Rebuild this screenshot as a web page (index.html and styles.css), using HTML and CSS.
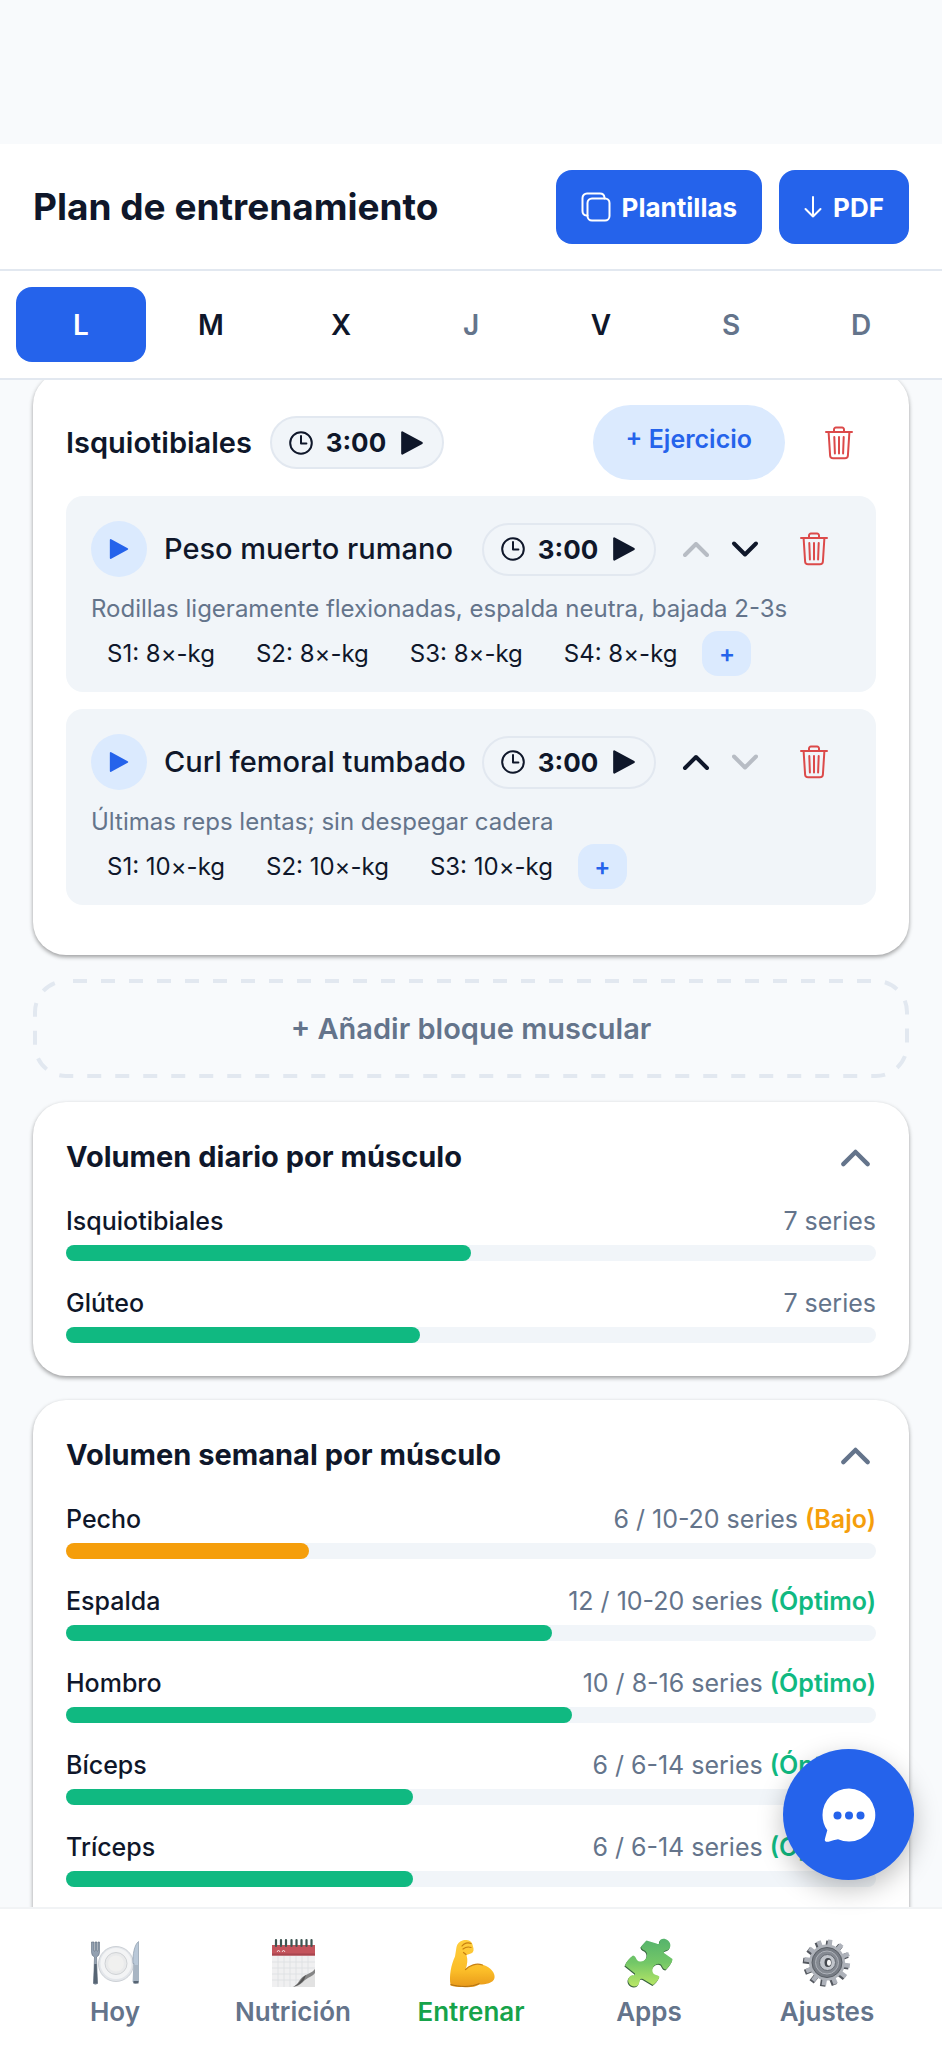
FILE: index.html
```html
<!DOCTYPE html>
<html lang="es">
<head>
<meta charset="utf-8">
<meta name="viewport" content="width=device-width, initial-scale=1">
<title>Plan de entrenamiento</title>
<link rel="stylesheet" href="styles.css">
</head>
<body>
<svg class="defs" aria-hidden="true">
  <symbol id="i-clock" viewBox="0 0 24 24"><circle cx="12" cy="12" r="10.8"/><path d="M12 5v7.6h5.4"/></symbol>
  <symbol id="i-play" viewBox="0 0 24 24"><path d="M3 2.2v19.600L21 12z"/></symbol>
  <symbol id="i-up" viewBox="0 0 28 28"><path d="M3 20 14 9l11 11"/></symbol>
  <symbol id="i-down" viewBox="0 0 28 28"><path d="M3 8.500l11 11 11-11"/></symbol>
  <symbol id="i-trash" viewBox="0 0 28 34"><path d="M1 6h26M3.600 6l1.500 23.500a3 3 0 0 0 3 2.800h11.800a3 3 0 0 0 3-2.800L24.400 6M9 6V3.600A2 2 0 0 1 11 1.500h6a2 2 0 0 1 2 2.100V6M9.300 11l.6 16.500M14 11v16.500M18.700 11l-.6 16.500"/></symbol>
</svg>
<div class="app">
  <header class="header">
    <h1 class="title">Plan de entrenamiento</h1>
    <button class="btn" type="button">
      <svg class="ic-copy" viewBox="0 0 30 30" aria-hidden="true"><rect x="6.500" y="6.500" width="22" height="22" rx="4.500"/><path d="M6.500 23.500H5.500a4.500 4.500 0 0 1-4-4.500V6a4.500 4.500 0 0 1 4.500-4.500h13a4.500 4.500 0 0 1 4.500 4v1"/></svg>
      Plantillas
    </button>
    <button class="btn" type="button">
      <svg class="ic-arrow" viewBox="0 0 18 22" aria-hidden="true"><path d="M9 1v19.500M1.500 13 9 20.500 16.500 13"/></svg>
      PDF
    </button>
  </header>
  <nav class="days" aria-label="Días">
    <button class="day active" type="button">L</button>
    <button class="day" type="button">M</button>
    <button class="day" type="button">X</button>
    <button class="day rest" type="button">J</button>
    <button class="day" type="button">V</button>
    <button class="day rest" type="button">S</button>
    <button class="day rest" type="button">D</button>
  </nav>
  <main class="content">
    <section class="card block">
      <div class="block-head">
        <h2 class="block-name">Isquiotibiales</h2>
        <button class="timer" type="button"><svg class="ic-clock"><use href="#i-clock"/></svg>3:00<svg class="ic-play"><use href="#i-play"/></svg></button>
        <button class="add-ex" type="button">+ Ejercicio</button>
        <button class="trash" type="button" aria-label="Eliminar bloque"><svg class="ic-trash"><use href="#i-trash"/></svg></button>
      </div>
      <article class="exercise">
        <div class="ex-head">
          <button class="video" type="button" aria-label="Ver vídeo"><svg class="ic-video"><use href="#i-play"/></svg></button>
          <h3 class="ex-name">Peso muerto rumano</h3>
          <button class="timer" type="button"><svg class="ic-clock"><use href="#i-clock"/></svg>3:00<svg class="ic-play"><use href="#i-play"/></svg></button>
          <div class="moves">
            <button class="move" type="button" aria-label="Subir" disabled><svg class="ic-chev"><use href="#i-up"/></svg></button>
            <button class="move" type="button" aria-label="Bajar"><svg class="ic-chev"><use href="#i-down"/></svg></button>
          </div>
          <button class="trash" type="button" aria-label="Eliminar ejercicio"><svg class="ic-trash"><use href="#i-trash"/></svg></button>
        </div>
        <p class="note">Rodillas ligeramente flexionadas, espalda neutra, bajada 2-3s</p>
        <div class="sets">
          <span class="set">S1: 8×-kg</span><span class="set">S2: 8×-kg</span><span class="set">S3: 8×-kg</span><span class="set">S4: 8×-kg</span>
          <button class="add-set" type="button" aria-label="Añadir serie">+</button>
        </div>
      </article>
      <article class="exercise">
        <div class="ex-head">
          <button class="video" type="button" aria-label="Ver vídeo"><svg class="ic-video"><use href="#i-play"/></svg></button>
          <h3 class="ex-name">Curl femoral tumbado</h3>
          <button class="timer" type="button"><svg class="ic-clock"><use href="#i-clock"/></svg>3:00<svg class="ic-play"><use href="#i-play"/></svg></button>
          <div class="moves">
            <button class="move" type="button" aria-label="Subir"><svg class="ic-chev"><use href="#i-up"/></svg></button>
            <button class="move" type="button" aria-label="Bajar" disabled><svg class="ic-chev"><use href="#i-down"/></svg></button>
          </div>
          <button class="trash" type="button" aria-label="Eliminar ejercicio"><svg class="ic-trash"><use href="#i-trash"/></svg></button>
        </div>
        <p class="note">Últimas reps lentas; sin despegar cadera</p>
        <div class="sets">
          <span class="set">S1: 10×-kg</span><span class="set">S2: 10×-kg</span><span class="set">S3: 10×-kg</span>
          <button class="add-set" type="button" aria-label="Añadir serie">+</button>
        </div>
      </article>
    </section>

    <button class="add-block" type="button">
      <svg class="dashes" aria-hidden="true"><rect class="dash-rect" x="2" y="2" rx="31"/></svg>
      + Añadir bloque muscular
    </button>

    <section class="card">
      <div class="vol-head"><h2 class="vol-title">Volumen diario por músculo</h2><button class="fold" type="button" aria-label="Plegar"><svg class="ic-fold"><use href="#i-up"/></svg></button></div>
      <div class="rows">
        <div class="row"><span class="muscle">Isquiotibiales</span><span class="count">7 series</span><div class="track"><div class="fill" style="width:50%"></div></div></div>
        <div class="row"><span class="muscle">Glúteo</span><span class="count">7 series</span><div class="track"><div class="fill" style="width:43.75%"></div></div></div>
      </div>
    </section>

    <section class="card weekly">
      <div class="vol-head"><h2 class="vol-title">Volumen semanal por músculo</h2><button class="fold" type="button" aria-label="Plegar"><svg class="ic-fold"><use href="#i-up"/></svg></button></div>
      <div class="rows">
        <div class="row"><span class="muscle">Pecho</span><span class="count">6 / 10-20 series <b class="low">(Bajo)</b></span><div class="track"><div class="fill warn" style="width:30%"></div></div></div>
        <div class="row"><span class="muscle">Espalda</span><span class="count">12 / 10-20 series <b class="ok">(Óptimo)</b></span><div class="track"><div class="fill" style="width:60%"></div></div></div>
        <div class="row"><span class="muscle">Hombro</span><span class="count">10 / 8-16 series <b class="ok">(Óptimo)</b></span><div class="track"><div class="fill" style="width:62.5%"></div></div></div>
        <div class="row"><span class="muscle">Bíceps</span><span class="count">6 / 6-14 series <b class="ok">(Óptimo)</b></span><div class="track"><div class="fill" style="width:42.86%"></div></div></div>
        <div class="row"><span class="muscle">Tríceps</span><span class="count">6 / 6-14 series <b class="ok">(Óptimo)</b></span><div class="track"><div class="fill" style="width:42.86%"></div></div></div>
      </div>
    </section>
  </main>

  <nav class="tabs" aria-label="Principal">
    <a class="tab" href="#hoy">
      <svg class="ic-tab" viewBox="0 0 50 50" aria-hidden="true">
        <circle cx="26" cy="26" r="17.500" fill="#e3e6ea" stroke="#c3c8ce" stroke-width=".8"/><circle cx="26" cy="25.500" r="15.500" fill="#f3f4f5"/><circle cx="26" cy="25.500" r="11" fill="#e9eaeb" stroke="#cfd2d5"/><circle cx="26" cy="25.500" r="8" fill="#f0f0ef"/>
        <path d="M1.500 4v10q0 4 3 5l-1 26.500q1.500 1.500 4 0L6.500 19q3-1 3-5V4H8v9H7V4H5v9H4V4z" fill="#93a1b1" stroke="#5f6d7d" stroke-width=".6"/><path d="M4.300 26 3.500 45.500h4L6.600 26z" fill="#566473"/>
        <path d="M48.500 3.500c-4 3-6 13-5.500 22h1l-1 18.500q2.500 2.500 5.500 0z" fill="#b9c8d8" stroke="#8d9cac" stroke-width=".7"/><path d="M44 27h4.500v17H43.500z" fill="#a8b5c3"/><path d="M43.500 43h5v2.500h-5z" fill="#566473"/>
      </svg>Hoy</a>
    <a class="tab" href="#nutricion">
      <svg class="ic-tab" viewBox="0 0 50 50" aria-hidden="true">
        <path d="M4 8h43v41H4z" fill="#f0f0f1"/><path d="M4 24h43M4 30h43M4 36h43M4 42h43M10 18v31M16 18v31M22 18v31M28 18v31M34 18v31M40 18v31" stroke="#dcdee2" stroke-width=".8"/>
        <path d="M4 7h43v10.500H4z" fill="#c4545c"/><path d="M4 15.500h43v2H4z" fill="#a8454e"/><path d="m9 14 1.500-2 1.500 2M14 14l1.500-2 1.500 2" stroke="#f2d5d7" fill="none"/>
        <path d="M8 2v6M13 2v6M18 2v6M23.500 2v6M28.500 2v6M33.500 2v6M38.500 2v6M43.500 2v6" stroke="#3e5551" stroke-width="2.200" stroke-linecap="round"/>
        <path d="M47 31v18H24c8-3 13-6 15-10 3-1 6-4 8-8z" fill="#e2e2e2"/><path d="M47 31c-3 4-7 4.500-11 7-5 3-5 8-11 11 6-1 9-4 12-7 4-3 8-4 10-7z" fill="#858585"/><path d="M38 37c-5 3-5 8-12 11.500 5-1.500 8-4 10-6.500z" fill="#555"/>
      </svg>Nutrición</a>
    <a class="tab current" href="#entrenar">
      <svg class="ic-tab" viewBox="0 0 50 50" aria-hidden="true">
        <defs><linearGradient id="g-arm" x1="0" y1="0" x2="0" y2="1"><stop offset="0" stop-color="#ffcf3e"/><stop offset=".65" stop-color="#fbbd28"/><stop offset="1" stop-color="#e8991a"/></linearGradient></defs>
        <path d="M4.500 46.500C3 38 5 27 9 18.500L10.500 9q1-5 6-6.500c4-1.200 9 0 10 4l1 4c.5 3-1 5-4 5.500l-3 1q2 7-1 14.500c5-5 12-6.500 18-4.500 7 2.300 12 8 11 13-1 5-9 6.500-15 6.500-5 3-11 3-17 2.500-5 0-8.500-.5-12-1.500z" fill="url(#g-arm)"/>
        <path d="M19.500 31.500c4-4.500 11-6.500 17-4.500M16 8c2-3 6-4 9-2.500M17 11q4-3 8-1.500M17.500 14.500l2.500 2" fill="none" stroke="#c87f10" stroke-width="1.200" stroke-linecap="round"/><path d="M4.500 46.500c9 2.500 20 3 29-1" fill="none" stroke="#a66a12" stroke-width=".9"/>
      </svg>Entrenar</a>
    <a class="tab" href="#apps">
      <svg class="ic-tab" viewBox="0 0 50 50" aria-hidden="true">
        <defs><linearGradient id="g-puz" x1="0" y1="0" x2="0" y2="1"><stop offset="0" stop-color="#55b36c"/><stop offset=".5" stop-color="#73c767"/><stop offset="1" stop-color="#b9e766"/></linearGradient></defs>
        <path d="M17 8.500 22.500 2.500 32.500 5.500C35 7 36 5 35.500 4 36 0 41 0 44 2.500c3.500 3 3 8-.5 9.500-2.500 1-4.500 1-3.500 3l8.500 6c0 3-3 7-6.500 10.500-3-.5-3-2-5-5-4-2.500-9.500 2-8.500 7 1 4.500 6 3 7 5.500-1.500 3.500-4 6.500-6.500 8l-10-6c-3-1-3 0-3.500 3-1 4.500-5 5.500-8.500 3.500-3.500-2.500-4-7-.5-9.500 2-1.500 5 0 4.500-2.500L1 27.500c2-5 5-8 8-10 4 1 2.500 5.500 7 6 5 .5 8.500-5 6.500-9-1.500-3-5-2-5.500-6z" fill="#37633f" transform="translate(-.6 1)"/><path d="M17 8.500 22.500 2.500 32.500 5.500C35 7 36 5 35.500 4 36 0 41 0 44 2.500c3.500 3 3 8-.5 9.500-2.500 1-4.500 1-3.500 3l8.500 6c0 3-3 7-6.500 10.500-3-.5-3-2-5-5-4-2.500-9.500 2-8.500 7 1 4.500 6 3 7 5.500-1.500 3.500-4 6.500-6.500 8l-10-6c-3-1-3 0-3.500 3-1 4.500-5 5.500-8.500 3.500-3.500-2.500-4-7-.5-9.500 2-1.500 5 0 4.500-2.500L1 27.500c2-5 5-8 8-10 4 1 2.500 5.500 7 6 5 .5 8.500-5 6.500-9-1.500-3-5-2-5.500-6z" fill="url(#g-puz)"/>
      </svg>Apps</a>
    <a class="tab" href="#ajustes">
      <svg class="ic-tab" viewBox="0 0 50 50" aria-hidden="true">
        <g stroke="#54585f" stroke-width="5.500"><path d="M24.500 2v46M1.500 25h46M13 5l23 40M5 13.500l40 23M36.500 5 13 45M45 13.500l-40 23" transform="rotate(8 25 25) translate(-.6 .8)"/></g>
        <g stroke="#aeb2ba" stroke-width="4.500"><path d="M25 1.500v46M2 24.500h46M13.500 4.500l23 40M5.500 13l40 23M37 4.500 13.500 44.500M45.500 13l-40 23" transform="rotate(8 25 25)"/></g>
        <circle cx="25" cy="24.500" r="18" fill="#adb1b8"/><circle cx="25" cy="24.500" r="15" fill="#777c84" stroke="#595e65"/><circle cx="25" cy="24.500" r="11.500" fill="#858a92" stroke="#aeb2b9"/><circle cx="25.500" cy="24.500" r="8" fill="#c0c4ca" stroke="#666b73"/><ellipse cx="26" cy="24.500" rx="3.500" ry="4.500" fill="#44484e"/><ellipse cx="27" cy="24.800" rx="2" ry="3" fill="#f6f6f6"/>
      </svg>Ajustes</a>
  </nav>
</div>
<button class="chat" type="button" aria-label="Abrir chat">
  <svg class="ic-chat" viewBox="0 0 54 54" aria-hidden="true"><path d="M27 .5A26.500 26.500 0 1 1 16 51.200c-3 .3-6 1.800-9.500 2.500-3 .6-4.200-.7-3.500-3.300l2.300-8.200C2 38 .5 32 .5 27A26.500 26.500 0 0 1 27 .5z" fill="#fff"/><g fill="#2563eb"><circle cx="15.500" cy="27.500" r="4"/><circle cx="27" cy="27.500" r="4"/><circle cx="38.500" cy="27.500" r="4"/></g></svg>
</button>
</body>
</html>
```
FILE: styles.css
```css
* { box-sizing: border-box; }
body, h1, h2, h3, p { margin: 0; }
body {
  font-family: Inter, "Liberation Sans", sans-serif;
  color: #0f172a;
  background: #f8fafc;
}
button {
  font-family: inherit;
  color: inherit;
  border: 0;
  padding: 0;
  background: none;
  cursor: pointer;
}
svg { display: block; flex: none; fill: none; stroke-linecap: round; stroke-linejoin: round; }
.defs { position: absolute; width: 0; height: 0; }

.app {
  display: flex;
  flex-direction: column;
  height: 100vh;
  padding-top: 144px;
}

.header {
  display: flex;
  align-items: center;
  gap: 17px;
  padding: 26px 33px 25px;
  background: #fff;
  border-bottom: 2px solid #e2e8f0;
}
.title { flex: 1; font-size: 37px; line-height: 44px; font-weight: 700; }
.btn {
  display: flex;
  align-items: center;
  gap: 11px;
  height: 74px;
  padding: 0 25px;
  border-radius: 16px;
  background: #2563eb;
  color: #fff;
  font-size: 26px;
  font-weight: 700;
}
.ic-copy { width: 30px; height: 30px; stroke: #fff; stroke-width: 2; }
.ic-arrow { width: 18px; height: 22px; stroke: #fff; stroke-width: 2; }

.days {
  display: flex;
  padding: 16px;
  background: #fff;
  border-bottom: 2px solid #e2e8f0;
}
.day {
  flex: 1;
  height: 75px;
  border-radius: 16px;
  font-size: 28px;
  font-weight: 600;
}
.day.rest { color: #64748b; }
.day.active { background: #2563eb; color: #fff; }

.content {
  display: flex;
  flex-direction: column;
  gap: 24px;
  flex: 1;
  min-height: 0;
  padding: 0 33px;
  overflow: hidden;
}
.content > * { flex: none; }
.card {
  padding: 33px;
  border-radius: 33px;
  background: #fff;
  box-shadow: 0 2px 4px rgba(0, 0, 0, .38);
}
/* First card is scrolled slightly under the day bar */
.block { margin-top: -8px; padding-bottom: 50px; }
.block-head { display: flex; align-items: center; margin-bottom: 16px; }
.block-name { font-size: 29px; line-height: 36px; font-weight: 600; margin-right: 18px; }
.timer {
  display: flex;
  align-items: center;
  justify-content: center;
  gap: 13px;
  width: 174px;
  height: 53px;
  border: 2px solid #e2e8f0;
  border-radius: 27px;
  background: #f1f5f9;
  font-size: 26px;
  font-weight: 700;
}
.ic-clock { width: 24px; height: 24px; stroke: #0f172a; stroke-width: 2; }
.ic-play { width: 26px; height: 26px; fill: #0f172a; stroke: #0f172a; stroke-width: 2; }
.add-ex {
  height: 75px;
  margin-left: auto;
  margin-right: 17px;
  padding: 0 33px 8px;
  border-radius: 38px;
  background: #dbeafe;
  color: #2563eb;
  font-size: 25px;
  font-weight: 600;
}
.trash { display: flex; align-items: center; justify-content: center; width: 74px; height: 56px; }
.ic-trash { width: 28px; height: 34px; stroke: #dc4a4a; stroke-width: 2; }

.exercise {
  padding: 25px 25px 16px;
  border-radius: 17px;
  background: #f1f5f9;
}
.exercise + .exercise { margin-top: 17px; }
.ex-head { display: flex; align-items: center; }
.video {
  display: flex;
  align-items: center;
  justify-content: center;
  width: 56px;
  height: 56px;
  border-radius: 50%;
  background: #dbeafe;
}
.ic-video { width: 22px; height: 22px; fill: #2563eb; stroke: #2563eb; stroke-width: 2; }
.ex-name { flex: 1; margin-left: 17px; font-size: 29px; line-height: 36px; font-weight: 500; white-space: nowrap; }
.moves { display: flex; margin: 0 8px 0 15px; }
.move { display: flex; align-items: center; justify-content: center; width: 49px; height: 49px; }
.move:disabled { opacity: .25; }
.ic-chev { width: 28px; height: 28px; stroke: #0f172a; stroke-width: 4; }
.note { margin-top: 16px; font-size: 24px; line-height: 32px; color: #64748b; }
.sets { display: flex; align-items: center; gap: 9px; margin-top: 6px; }
.set { padding: 0 16px; font-size: 24px; line-height: 32px; }
.add-set {
  width: 49px;
  height: 45px;
  border-radius: 16px;
  background: #dbeafe;
  color: #2563eb;
  font-size: 24px;
  font-weight: 600;
}

.add-block {
  position: relative;
  height: 99px;
  font-size: 29px;
  font-weight: 600;
  color: #64748b;
}
.dashes { position: absolute; inset: 0; width: 100%; height: 100%; }
.dash-rect {
  width: calc(100% - 4px);
  height: calc(100% - 4px);
  stroke: #e2e8f0;
  stroke-width: 4;
  stroke-linecap: butt;
  stroke-dasharray: 14 14;
  stroke-dashoffset: -7;
}

.vol-head { display: flex; align-items: center; justify-content: space-between; margin-bottom: 27px; }
.vol-title { font-size: 29px; line-height: 44px; font-weight: 700; }
.fold { display: flex; padding: 0 5px; }
.ic-fold { width: 31px; height: 31px; stroke: #64748b; stroke-width: 4; }
.weekly { padding-bottom: 120px; }
.rows { display: grid; gap: 27px; }
.row {
  display: grid;
  grid-template-columns: 1fr auto;
  row-gap: 9px;
  font-size: 25px;
  line-height: 30px;
}
.muscle { font-weight: 500; }
.count { color: #64748b; }
.low, .ok { font-weight: 600; }
.low { color: #f59e0b; }
.ok { color: #10b981; }
.track { grid-column: 1 / -1; height: 16px; border-radius: 8px; background: #f1f5f9; }
.fill { height: 100%; border-radius: 8px; background: #10b981; }
.fill.warn { background: #f59e0b; }

.tabs {
  display: flex;
  height: 141px;
  padding: 29px 26px 0;
  background: #fff;
  border-top: 2px solid #f1f3f5;
}
.tab {
  display: flex;
  flex: 1;
  flex-direction: column;
  align-items: center;
  gap: 8px;
  font-size: 26px;
  line-height: 32px;
  font-weight: 600;
  color: #64748b;
  text-decoration: none;
}
.tab.current { color: #16a34a; }
.ic-tab { width: 50px; height: 50px; stroke-linecap: butt; }

.chat {
  position: fixed;
  right: 28px;
  bottom: 168px;
  display: flex;
  align-items: center;
  justify-content: center;
  width: 131px;
  height: 131px;
  border-radius: 50%;
  background: #2563eb;
  box-shadow: 0 9px 26px rgba(0, 0, 0, .25);
}
.ic-chat { width: 54px; height: 54px; }
```
